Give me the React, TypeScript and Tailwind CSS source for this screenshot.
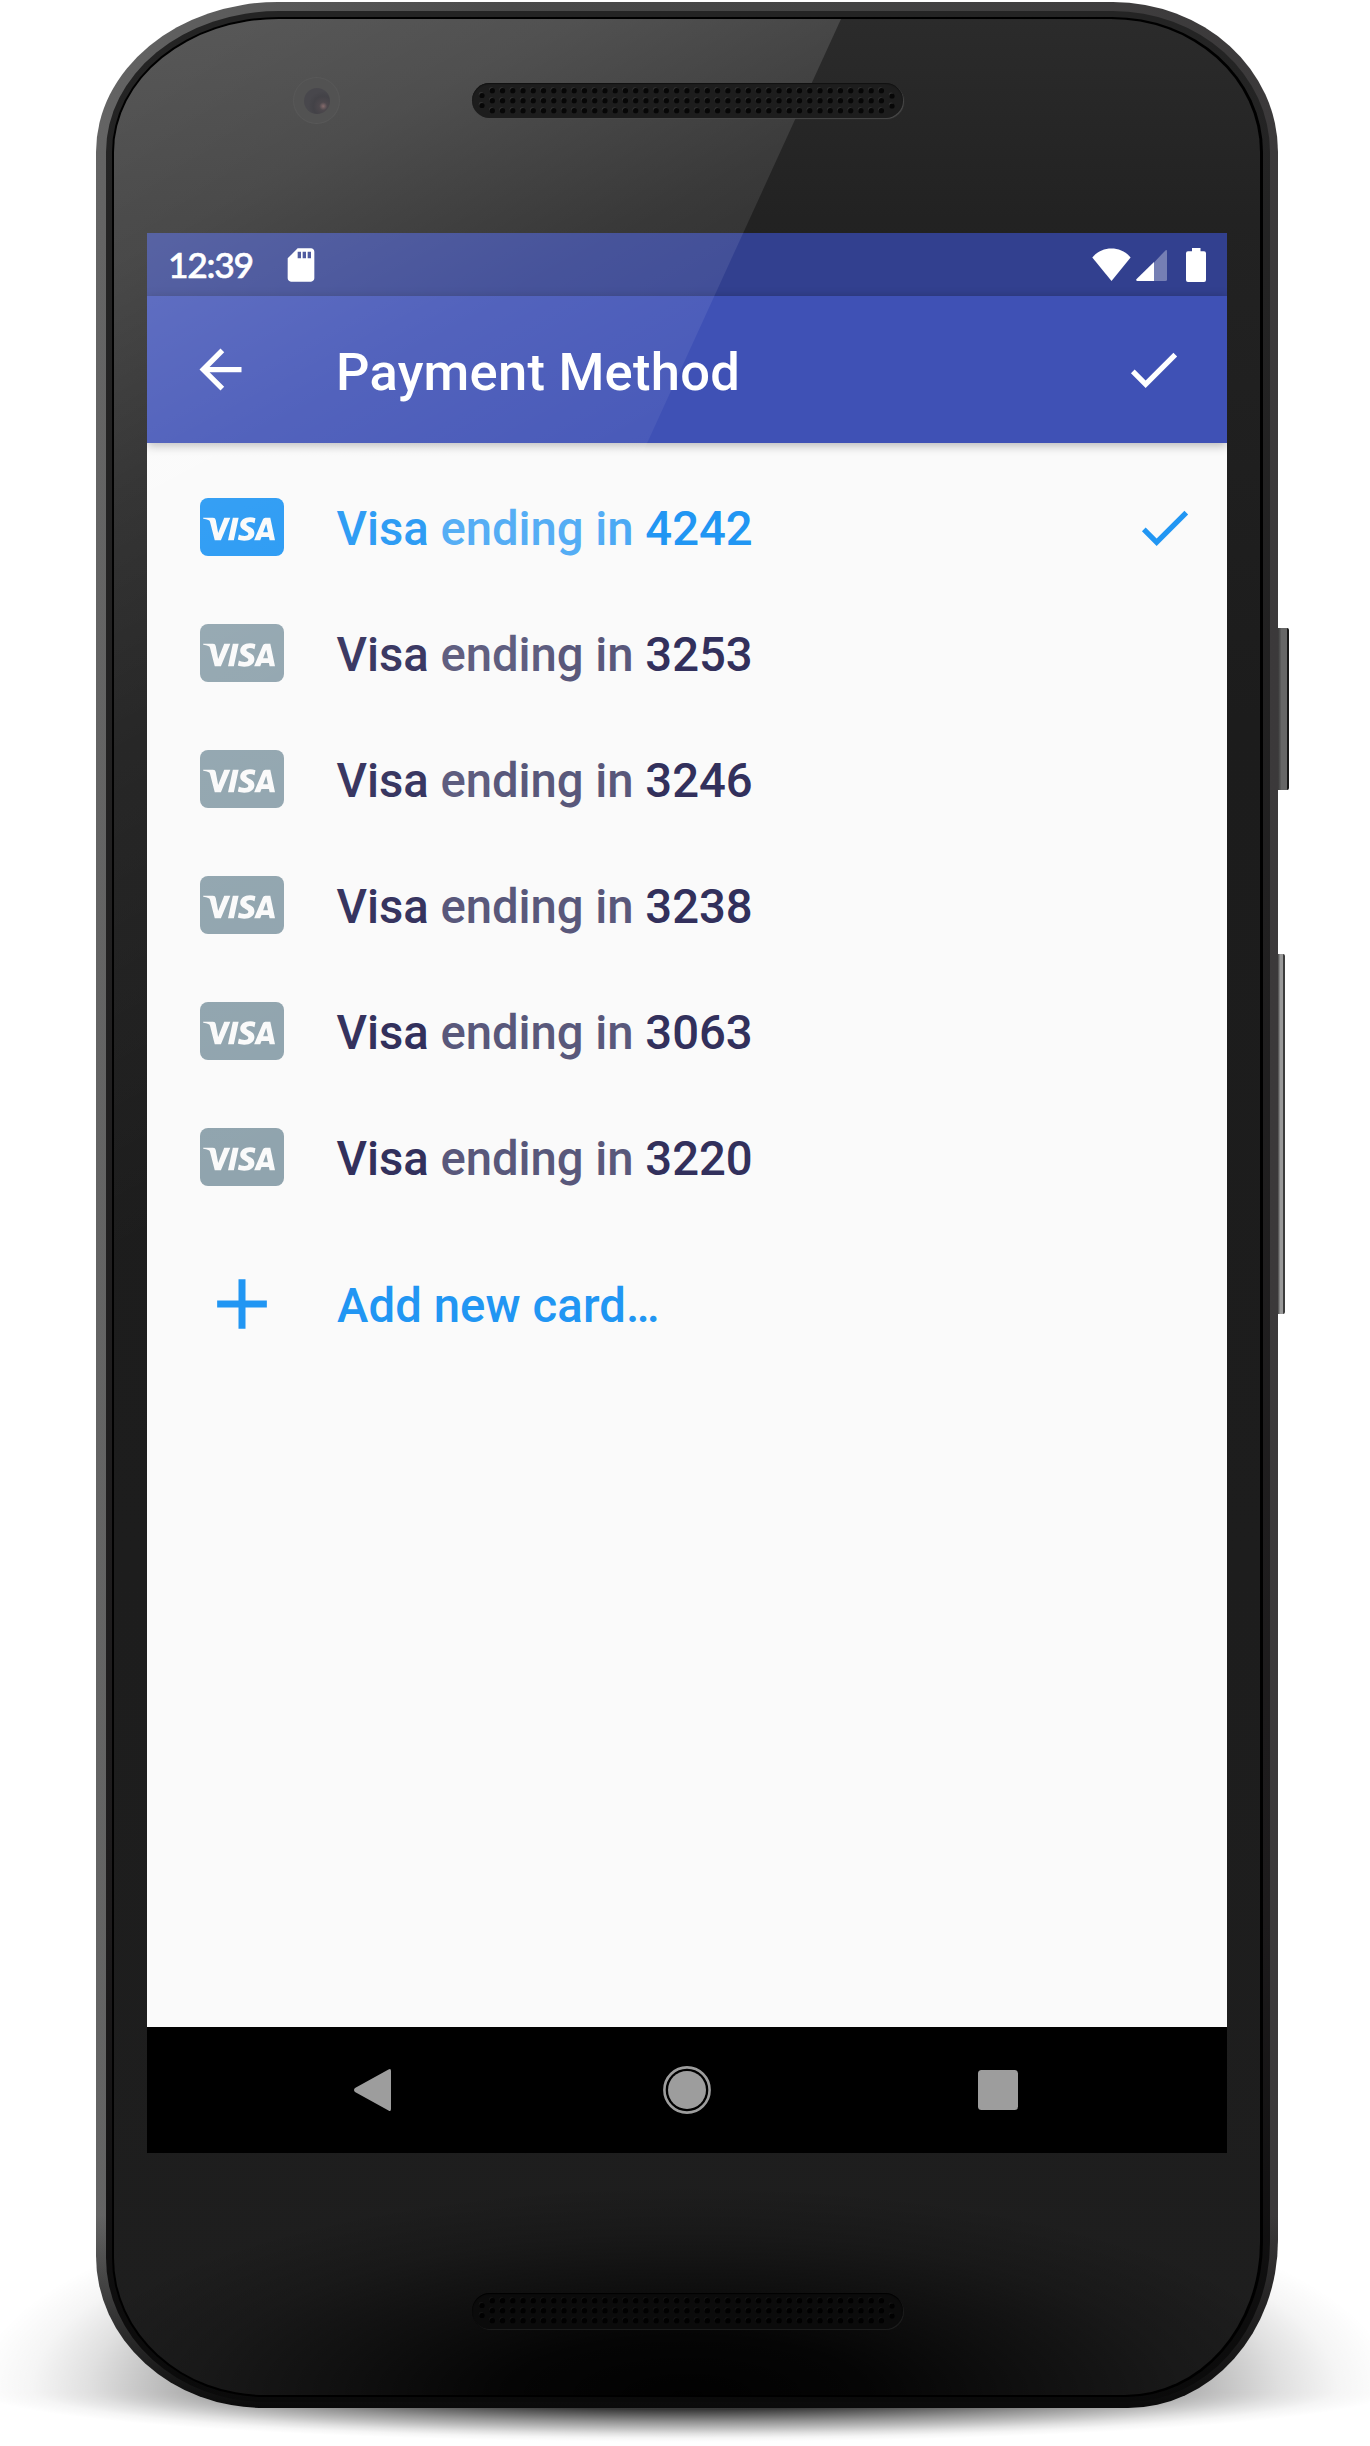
import React from "react";
import { SiVisa } from "react-icons/si";

const cards = [
  { digits: "4242", selected: true },
  { digits: "3253", selected: false },
  { digits: "3246", selected: false },
  { digits: "3238", selected: false },
  { digits: "3063", selected: false },
  { digits: "3220", selected: false },
];

function CheckIcon() {
  return (
    <svg viewBox="0 0 24 24" className="size-[63px] shrink-0" fill="currentColor">
      <path d="M9 16.17 4.83 12l-1.42 1.41L9 19 21 7l-1.41-1.41z" />
    </svg>
  );
}

/* Perforated grille: 39 columns of three holes with a staggered pair at each end. */
function Speaker({ dim = false }: { dim?: boolean }) {
  const holes: [number, number][] = [
    [10, 12.5],
    [10, 22.5],
    [420, 13],
    [420, 23],
  ];
  for (let c = 0; c < 39; c++) {
    for (let r = 0; r < 3; r++) holes.push([20.3 + c * 10.24, 7.7 + r * 10]);
  }
  return (
    <div
      className={
        dim
          ? "h-[36px] w-[431px] rounded-full bg-[#0b0b0b] shadow-[inset_0_1px_1px_#000,1px_1px_0_#1c1c1c]"
          : "relative z-10 h-[35px] w-[431px] rounded-full bg-[#1d1d1d] shadow-[inset_0_1px_1px_#111,1px_1px_1px_#4a4a4a]"
      }
    >
      <svg viewBox="0 0 431 35" className="block h-[35px] w-[431px]">
        {holes.map(([x, y], i) => (
          <g key={i}>
            <circle cx={x - 0.9} cy={y - 1.2} r="2.3" fill={dim ? "#161616" : "#333"} />
            <circle cx={x} cy={y} r="2.6" fill={dim ? "#010101" : "#070707"} />
          </g>
        ))}
      </svg>
    </div>
  );
}

function StatusBar() {
  return (
    <div className="flex h-[63px] items-center bg-[#32408f] pr-[21px] pl-[21px] text-white">
      <span className="w-[113px] font-['Lato',sans-serif] text-[35.500px] leading-[63px] font-medium tracking-[-1.300px] [-webkit-text-stroke:0.600px_white]">
        12:39
      </span>
      <svg viewBox="0 0 24 24" className="size-[40px]" fill="currentColor">
        <path d="M18 2h-8L4.020 8 4 20c0 1.100.9 2 2 2h12c1.100 0 2-.9 2-2V4c0-1.100-.9-2-2-2zm-6 6h-2V4h2v4zm3 0h-2V4h2v4zm3 0h-2V4h2v4z" />
      </svg>
      <div className="ml-auto flex items-center">
        <svg viewBox="0 0 39 34" className="mr-[5px] h-[34px] w-[39px]" fill="currentColor">
          <path d="M0.300 9.500C5 3.500 12 .5 19.400.5S34 3.500 38.600 9.500L19.500 33z" />
        </svg>
        <svg viewBox="0 0 31 34" className="mr-[19px] h-[34px] w-[31px]" fill="currentColor">
          <path d="M18 14.500V33h11.500q1.500 0 1.500-1.500V3.200q0-2-1.600-.8z" fillOpacity=".33" />
          <path d="M18 14V33H1.200Q-.6 32.500.6 31z" />
        </svg>
        <svg viewBox="0 0 20 34" className="h-[34px] w-[20px]" fill="currentColor">
          <path d="M6 0h8.500v3.200H18q2 0 2 2V32q0 2-2 2H2q-2 0-2-2V5.200q0-2 2-2h4z" />
        </svg>
      </div>
    </div>
  );
}

function AppBar() {
  return (
    <header className="relative flex h-[147px] items-center bg-[#3f51b5] px-[42px] text-white shadow-[0_2px_10px_rgba(0,0,0,0.3)]">
      <svg viewBox="0 0 24 24" className="size-[63px]" fill="currentColor">
        <path d="M20 11H7.830l5.590-5.590L12 4l-8 8 8 8 1.410-1.410L7.830 13H20z" />
      </svg>
      <h1 className="ml-[84px] flex-1 pt-[4px] text-[52.500px] leading-[62px] font-medium tracking-[0.250px] whitespace-nowrap">
        Payment Method
      </h1>
      <CheckIcon />
    </header>
  );
}

function CardRow({ digits, selected }: { digits: string; selected: boolean }) {
  return (
    <li
      className={
        selected
          ? "flex h-[126px] items-center pr-[31px] pl-[53px] text-[#2196f3]"
          : "flex h-[126px] items-center pr-[31px] pl-[53px] text-[#32305c]"
      }
    >
      <div
        className={
          selected
            ? "flex h-[58px] w-[84px] items-center rounded-[8px] bg-[#2196f3] pl-[3px] text-[#fafafa]"
            : "flex h-[58px] w-[84px] items-center rounded-[8px] bg-[#90a4ae] pl-[3px] text-[#fafafa]"
        }
      >
        <SiVisa className="mt-[3px] size-[72px]" />
      </div>
      <span className="ml-[52.500px] flex-1 pt-[4px] text-[47.250px] leading-[56px] font-medium tracking-[-0.030px] whitespace-nowrap">
        Visa <span className="opacity-80">ending in</span> {digits}
      </span>
      {selected && <CheckIcon />}
    </li>
  );
}

function NavBar() {
  return (
    <nav className="flex h-[126px] items-center justify-center gap-[263px] text-[#9d9d9d]">
      <svg viewBox="0 0 48 48" className="size-[48px]" fill="currentColor">
        <path d="M36.500 3.500Q39 2 39 5v38q0 3-2.500 1.500L3 26Q1 24 3 22z" />
      </svg>
      <svg viewBox="0 0 48 48" className="size-[48px]">
        <circle cx="24" cy="24" r="22.600" fill="none" stroke="currentColor" strokeWidth="2.600" />
        <circle cx="24" cy="24" r="19" fill="currentColor" />
      </svg>
      <svg viewBox="0 0 48 48" className="size-[48px]" fill="currentColor">
        <rect x="4" y="4" width="40" height="40" rx="3.500" />
      </svg>
    </nav>
  );
}

function Screen() {
  return (
    <div className="flex h-[1920px] w-[1080px] flex-col overflow-hidden bg-black">
      <StatusBar />
      <AppBar />
      <main className="flex-1 bg-[#fafafa] pt-[21px]">
        <ul>
          {cards.map((c) => (
            <CardRow key={c.digits} {...c} />
          ))}
        </ul>
        <div className="mt-[21px] flex h-[126px] items-center pl-[53px] text-[#2196f3]">
          <svg viewBox="0 0 24 24" className="size-[84px]" fill="currentColor">
            <path d="M19.100 13H13v6.100h-2V13H4.900v-2H11V4.900h2V11h6.100z" />
          </svg>
          <span className="ml-[53px] pt-[4px] text-[47.250px] leading-[56px] font-medium tracking-[0.100px]">
            Add new card…
          </span>
        </div>
      </main>
      <NavBar />
    </div>
  );
}

export default function App() {
  return (
    <div className="relative h-[2446px] w-[1370px] overflow-hidden bg-white font-['Roboto',sans-serif]">
      {/* ground shadow */}
      <div className="absolute top-[2150px] left-0 h-[240px] w-full bg-[radial-gradient(710px_225px_at_50%_100%,rgba(0,0,0,.84)_0%,rgba(0,0,0,.78)_38%,rgba(0,0,0,.6)_50%,rgba(0,0,0,.42)_62%,rgba(0,0,0,.26)_74%,rgba(0,0,0,.12)_84%,rgba(0,0,0,.04)_92%,transparent_100%)]" />
      <div className="absolute top-[2390px] left-0 h-[56px] w-full bg-[radial-gradient(710px_52px_at_50%_0%,rgba(0,0,0,.84)_0%,rgba(0,0,0,.78)_38%,rgba(0,0,0,.6)_50%,rgba(0,0,0,.42)_62%,rgba(0,0,0,.26)_74%,rgba(0,0,0,.12)_84%,rgba(0,0,0,.04)_92%,transparent_100%)]" />

      {/* side keys */}
      <div className="absolute top-[628px] left-[1276px] h-[162px] w-[13px] rounded-r-[2px] border-r-2 border-[#161616] bg-linear-to-r from-[#333] from-15% to-[#666] to-50%" />
      <div className="absolute top-[954px] left-[1276px] h-[360px] w-[9px] rounded-r-[2px] border-r-2 border-[#3c3c3c] bg-linear-to-r from-[#333] from-20% to-[#999] to-60%" />

      {/* body */}
      <div className="relative mt-[2px] ml-[96px] h-[2405.5px] w-[1182px] rounded-[182px_165px_150px_168px/150px_150px_168px_152px] bg-[linear-gradient(180deg,transparent_92%,#0a0a0a_100%),linear-gradient(90deg,#646464_0%,#4a4a4a_35%,#444_60%,#3b393a_100%)] p-[9px_8px_6px_10px]">
        <div className="h-full rounded-[173px_157px_142px_159px/141px_141px_160px_144px] bg-[linear-gradient(180deg,#242424,#1d1b1c_80%,#0a0a0a)] p-[6px_7px_5px_6px]">
          <div className="h-full rounded-[167px_151px_137px_153px/135px_135px_155px_139px] bg-black p-[2px_3px_2px_2px]">
            <div className="relative flex h-full flex-col items-center overflow-hidden rounded-[165px_149px_135px_151px/133px_133px_153px_137px] bg-[radial-gradient(640px_210px_at_50%_100%,rgba(0,0,0,.96)_0%,rgba(0,0,0,.84)_28%,rgba(0,0,0,.5)_52%,rgba(0,0,0,.18)_77%,transparent_100%),linear-gradient(180deg,#2b2b2b_0px,#222_200px,#1c1c1c_700px,#1e1e1e_100%)]">
              <div className="flex h-[214px] w-full shrink-0 justify-center pt-[64px]">
                <Speaker />
              </div>
              <Screen />
              <div className="pt-[140px]">
                <Speaker dim />
              </div>

              {/* glass reflection */}
              <div className="pointer-events-none absolute top-0 left-0 h-[1590px] w-[727px] bg-[linear-gradient(152deg,rgba(255,255,255,.22)_0px,rgba(255,255,255,.18)_215px,rgba(255,255,255,.1)_425px,rgba(255,255,255,.08)_520px,rgba(255,255,255,.05)_640px,transparent_1100px)] [clip-path:polygon(0_0,100%_0,0_100%)]" />

              {/* front camera */}
              <div className="absolute top-[59px] left-[180px] flex size-[45px] items-center justify-center rounded-full bg-[#525252] ring-1 ring-[#585858]">
                <div className="size-[26px] rounded-full bg-[radial-gradient(circle_at_74%_70%,#866c6d_0px,#4d484d_4px,#434247_10px,#48474c_15px)]" />
              </div>
            </div>
          </div>
        </div>
      </div>
    </div>
  );
}
